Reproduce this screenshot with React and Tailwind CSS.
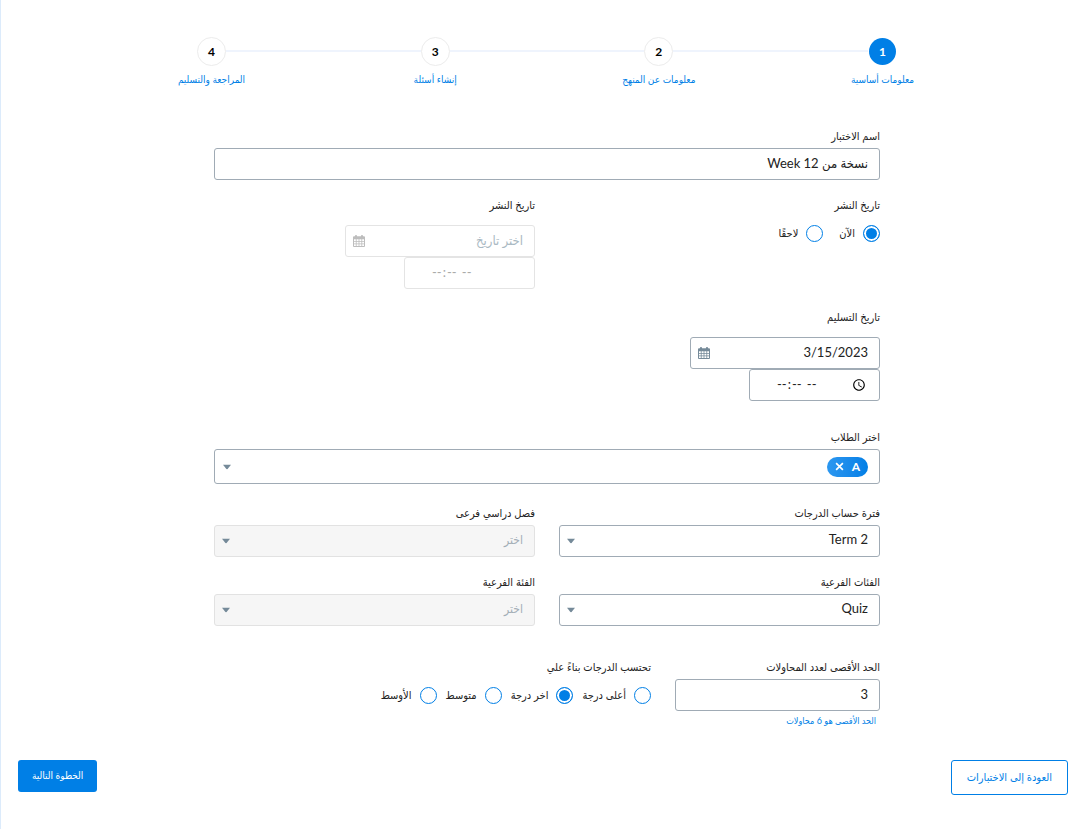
import React, { useState } from "react";

const steps = [
  { number: 1, title: "معلومات أساسية" },
  { number: 2, title: "معلومات عن المنهج" },
  { number: 3, title: "إنشاء أسئلة" },
  { number: 4, title: "المراجعة والتسليم" },
];

const gradingOptions = [
  { value: "highest", label: "أعلى درجة" },
  { value: "latest", label: "اخر درجة" },
  { value: "average", label: "متوسط" },
  { value: "median", label: "الأوسط" },
];

const Caret = () => (
  <svg
    viewBox="0 0 8 5"
    className="w-2 h-[5px] absolute left-2 top-1/2 -translate-y-1/2 pointer-events-none"
    aria-hidden="true"
  >
    <path d="M0.4 0h7.2q.6 0 .2.6L4.6 4.6q-.6.6-1.2 0L.2.6Q-.2 0 .4 0z" fill="#758a99" />
  </svg>
);

const CalendarIcon = () => (
  <svg viewBox="0 0 12 12" className="w-3 h-3" aria-hidden="true">
    <path
      fill="currentColor"
      fillRule="evenodd"
      d="M2 1.2C2 .5 2.4 0 3 0s1 .5 1 1.200h4C8 .5 8.400 0 9 0s1 .5 1 1.200h1a1 1 0 0 1 1 1V11a1 1 0 0 1-1 1H1a1 1 0 0 1-1-1V2.200a1 1 0 0 1 1-1zM1 4.200v1.800h1.800V4.200zm2.600 0v1.800h2V4.200zm2.800 0v1.800h2V4.200zm2.800 0v1.800H11V4.200zM1 6.700v1.800h1.800V6.700zm2.600 0v1.800h2V6.700zm2.800 0v1.800h2V6.700zm2.800 0v1.800H11V6.700zM1 9.200V11h1.800V9.200zm2.600 0V11h2V9.200zm2.800 0V11h2V9.200zm2.800 0V11H11V9.200z"
    />
  </svg>
);

const Label = ({ htmlFor, children }) => (
  <label htmlFor={htmlFor} className="block text-[11px] leading-5 mb-[2px] whitespace-nowrap">
    {children}
  </label>
);

const Radio = ({ name, value, label, checked, onChange }) => (
  <label className="flex items-center gap-2 text-[11px] leading-5 whitespace-nowrap">
    <input
      type="radio"
      name={name}
      value={value}
      checked={checked}
      onChange={() => onChange(value)}
      className="appearance-none w-[17px] h-[17px] shrink-0 rounded-full border border-[#007fe6] bg-white checked:bg-[#007fe6] checked:shadow-[inset_0_0_0_2px_white]"
    />
    {label}
  </label>
);

const Select = ({ id, label, value, disabled }) => (
  <div>
    <Label htmlFor={id}>{label}</Label>
    <div className="relative">
      <select
        id={id}
        disabled={disabled}
        className="block appearance-none w-full h-8 px-[11px] pb-[2px] rounded-[3px] border border-[#a0abb5] bg-white text-[13px] disabled:text-[12px] disabled:bg-[#f6f6f6] disabled:border-[#e2e2e2] disabled:text-[#a3aeb6] disabled:opacity-100"
      >
        <option>{value}</option>
      </select>
      <Caret />
    </div>
  </div>
);

// Date box with the time box stacked under it
const DateTime = ({ id, label, value, disabled }) => {
  const [date, setDate] = useState(value);

  return (
    <div>
      <label htmlFor={id} className="block text-[11px] leading-5 mb-[10px]">
        {label}
      </label>
      <div className="relative w-[190px]">
        <input
          id={id}
          type="text"
          value={date}
          onChange={(e) => setDate(e.target.value)}
          placeholder="اختر تاريخ"
          disabled={disabled}
          className="block w-full h-8 px-[11px] pb-[2px] rounded-[3px] border border-[#a0abb5] text-[13px] placeholder:text-[#a9b8c2] disabled:border-[#e4e4e4]"
        />
        <button
          type="button"
          disabled={disabled}
          aria-label="التقويم"
          className="absolute left-2 top-[10px] text-[#758a99] disabled:text-[#bdbdbd]"
        >
          <CalendarIcon />
        </button>
      </div>
      <input
        type="time"
        dir="ltr"
        aria-label="الوقت"
        disabled={disabled}
        className="block w-[131px] h-8 pl-[26px] pr-[10px] rounded-[3px] border border-[#a0abb5] text-[13px] disabled:border-[#e4e4e4] disabled:text-[#aaa]"
      />
    </div>
  );
};

const App = () => {
  const [name, setName] = useState("نسخة من Week 12");
  const [publish, setPublish] = useState("now");
  const [grading, setGrading] = useState("latest");
  const [attempts, setAttempts] = useState("3");
  const [students, setStudents] = useState(["A"]);

  return (
    <main
      dir="rtl"
      className="min-h-screen bg-white border-l border-[#dcebfb] pl-1 pt-[37px] text-[#222] font-['Lato','DejaVu_Sans_Condensed','DejaVu_Sans',sans-serif]"
    >
      {/* Stepper */}
      <ol className="flex items-start w-full max-w-[700px] mx-auto">
        {steps.map((step, index) => (
          <React.Fragment key={step.number}>
            {index > 0 && <li aria-hidden="true" className="flex-1 h-[2px] mt-[13px] bg-[#eff4fd]"></li>}
            <li className="w-[29px] flex flex-col items-center">
              <span
                className={
                  step.number === 1
                    ? "w-[27px] h-[27px] my-px rounded-full flex items-center justify-center text-[12px] font-bold bg-[#007fe6] text-white"
                    : "w-[29px] h-[29px] rounded-full flex items-center justify-center text-[12px] font-bold border border-[#ececec] text-black"
                }
              >
                {step.number}
              </span>
              <a href="#" className="mt-[5px] text-[10px] leading-4 whitespace-nowrap text-[#007fe6]">
                {step.title}
              </a>
            </li>
          </React.Fragment>
        ))}
      </ol>

      <form onSubmit={(e) => e.preventDefault()}>
        <div className="w-full max-w-[666px] mx-auto mt-[39px]">
          <Label htmlFor="quiz-name">اسم الاختبار</Label>
          <input
            id="quiz-name"
            type="text"
            value={name}
            onChange={(e) => setName(e.target.value)}
            className="block w-full h-8 px-[11px] pb-[2px] rounded-[3px] border border-[#a0abb5] text-[13px]"
          />

          {/* Publish date */}
          <div className="grid grid-cols-2 gap-6 mt-[15px]">
            <fieldset>
              <legend className="text-[11px] leading-5 mb-2">تاريخ النشر</legend>
              <div className="flex gap-4">
                <Radio name="publish" value="now" label="الآن" checked={publish === "now"} onChange={setPublish} />
                <Radio name="publish" value="later" label="لاحقًا" checked={publish === "later"} onChange={setPublish} />
              </div>
            </fieldset>
            <DateTime id="publish-date" label="تاريخ النشر" value="" disabled />
          </div>

          {/* Due date */}
          <div className="mt-[18px]">
            <DateTime id="due-date" label="تاريخ التسليم" value="3/15/2023" />
          </div>

          {/* Students */}
          <div className="mt-[26px]">
            <Label htmlFor="students">اختر الطلاب</Label>
            <div className="relative flex items-center w-full h-[35px] px-[11px] rounded-[3px] border border-[#a0abb5]">
              {students.map((student) => (
                <span
                  key={student}
                  className="flex items-center gap-2 h-5 px-2 rounded-full bg-linear-to-l from-[#007fe6] to-[#2b97f0] text-white text-[12px] font-bold"
                >
                  {student}
                  <button
                    type="button"
                    aria-label="إزالة"
                    onClick={() => setStudents(students.filter((s) => s !== student))}
                  >
                    <svg viewBox="0 0 8 8" className="w-[9px] h-[9px]" aria-hidden="true">
                      <path d="M1 1l6 6M7 1L1 7" stroke="currentColor" strokeWidth="1.5" />
                    </svg>
                  </button>
                </span>
              ))}
              <input id="students" type="text" className="flex-1 h-full min-w-0 outline-none" />
              <Caret />
            </div>
          </div>

          <div className="grid grid-cols-2 gap-x-6 gap-y-[15px] mt-[19px]">
            <Select id="term" label="فترة حساب الدرجات" value="Term 2" />
            <Select id="subterm" label="فصل دراسي فرعى" value="اختر" disabled />
            <Select id="category" label="الفئات الفرعية" value="Quiz" />
            <Select id="subcategory" label="الفئة الفرعية" value="اختر" disabled />
          </div>

          {/* Attempts */}
          <div className="flex gap-6 mt-[31px]">
            <div className="w-[205px]">
              <Label htmlFor="attempts">الحد الأقصى لعدد المحاولات</Label>
              <input
                id="attempts"
                type="text"
                value={attempts}
                onChange={(e) => setAttempts(e.target.value)}
                className="block w-full h-8 px-[11px] pb-[2px] rounded-[3px] border border-[#a0abb5] text-[13px]"
              />
              <p className="text-[9px] leading-4 mt-[2px] pr-1 text-[#007fe6]">الحد الأقصى هو 6 محاولات</p>
            </div>
            <fieldset>
              <legend className="text-[11px] leading-5 mb-2">تحتسب الدرجات بناءً علي</legend>
              <div className="flex gap-[9px]">
                {gradingOptions.map((option) => (
                  <Radio
                    key={option.value}
                    name="grading"
                    value={option.value}
                    label={option.label}
                    checked={grading === option.value}
                    onChange={setGrading}
                  />
                ))}
              </div>
            </fieldset>
          </div>
        </div>

        {/* Footer buttons */}
        <div className="flex items-start justify-between mt-[31px] pr-[21px] pl-[13px]">
          <a
            href="#"
            className="h-[35px] px-[15px] flex items-center rounded-[3px] border border-[#007fe6] text-[11px] text-[#007fe6]"
          >
            العودة إلى الاختبارات
          </a>
          <button type="submit" className="h-8 px-[14px] pb-[2px] rounded-[3px] bg-[#007fe6] text-[10px] text-white">
            الخطوة التالية
          </button>
        </div>
      </form>
    </main>
  );
};

export default App;
